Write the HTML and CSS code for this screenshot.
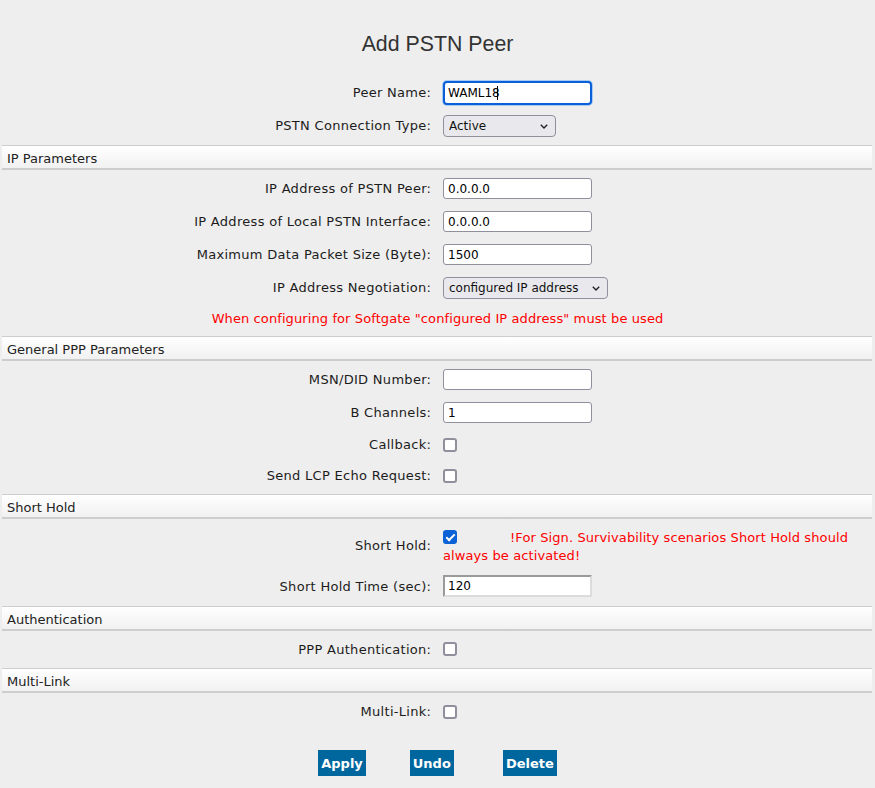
FILE: index.html
```html
<!DOCTYPE html>
<html lang="en">
<head>
<meta charset="utf-8">
<title>Add PSTN Peer</title>
<link rel="stylesheet" href="styles.css">
</head>
<body>
<div class="page">
  <h1 class="title">Add PSTN Peer</h1>

  <div class="row">
    <label class="lbl">Peer Name:</label>
    <div class="val">
      <span class="field-wrap">
        <input class="txt focus" type="text" value="WAML18">
        <span class="caret"></span>
      </span>
    </div>
  </div>
  <div class="row">
    <label class="lbl">PSTN Connection Type:</label>
    <div class="val">
      <span class="sel-wrap">
        <select class="sel sel-short"><option>Active</option></select>
        <svg class="chev" width="8" height="5" viewBox="0 0 8 5"><path d="M0.8 0.8 L4 4 L7.2 0.8" fill="none" stroke="#222" stroke-width="1.4"/></svg>
      </span>
    </div>
  </div>

  <div class="section">IP Parameters</div>
  <div class="row">
    <label class="lbl">IP Address of PSTN Peer:</label>
    <div class="val"><input class="txt" type="text" value="0.0.0.0"></div>
  </div>
  <div class="row">
    <label class="lbl">IP Address of Local PSTN Interface:</label>
    <div class="val"><input class="txt" type="text" value="0.0.0.0"></div>
  </div>
  <div class="row">
    <label class="lbl">Maximum Data Packet Size (Byte):</label>
    <div class="val"><input class="txt" type="text" value="1500"></div>
  </div>
  <div class="row">
    <label class="lbl">IP Address Negotiation:</label>
    <div class="val">
      <span class="sel-wrap">
        <select class="sel sel-long"><option>configured IP address</option></select>
        <svg class="chev" width="8" height="5" viewBox="0 0 8 5"><path d="M0.8 0.8 L4 4 L7.2 0.8" fill="none" stroke="#222" stroke-width="1.4"/></svg>
      </span>
    </div>
  </div>
  <div class="note">When configuring for Softgate "configured IP address" must be used</div>

  <div class="section">General PPP Parameters</div>
  <div class="row">
    <label class="lbl">MSN/DID Number:</label>
    <div class="val"><input class="txt" type="text" value=""></div>
  </div>
  <div class="row">
    <label class="lbl">B Channels:</label>
    <div class="val"><input class="txt" type="text" value="1"></div>
  </div>
  <div class="row cb">
    <label class="lbl">Callback:</label>
    <div class="val"><input class="chk" type="checkbox"></div>
  </div>
  <div class="row cb">
    <label class="lbl">Send LCP Echo Request:</label>
    <div class="val"><input class="chk" type="checkbox"></div>
  </div>

  <div class="section">Short Hold</div>
  <div class="row tall">
    <label class="lbl">Short Hold:</label>
    <div class="val-block"><input class="chk chk-inline" type="checkbox" checked><span class="warn">!For Sign. Survivability scenarios Short Hold should always be activated!</span></div>
  </div>
  <div class="row row-34">
    <label class="lbl">Short Hold Time (sec):</label>
    <div class="val"><input class="txt inset" type="text" value="120"></div>
  </div>

  <div class="section">Authentication</div>
  <div class="row row-32">
    <label class="lbl">PPP Authentication:</label>
    <div class="val"><input class="chk" type="checkbox"></div>
  </div>

  <div class="section">Multi-Link</div>
  <div class="row">
    <label class="lbl">Multi-Link:</label>
    <div class="val"><input class="chk" type="checkbox"></div>
  </div>

  <div class="buttons">
    <button class="btn">Apply</button>
    <button class="btn">Undo</button>
    <button class="btn btn-last">Delete</button>
  </div>
</div>
</body>
</html>
```

FILE: styles.css
```css
* { box-sizing: border-box; }
html, body { margin: 0; padding: 0; }
body {
  background: #eeeeee;
  font-family: "DejaVu Sans", Verdana, sans-serif;
  font-size: 13px;
  color: #1c1c1c;
}
.page { width: 875px; }

.title {
  margin: 32px 0 20px;
  font-family: "Liberation Sans", Arial, sans-serif;
  font-size: 21.33px;
  font-weight: normal;
  line-height: 24px;
  color: #333333;
  text-align: center;
}

.row {
  display: grid;
  grid-template-columns: 431px 1fr;
  column-gap: 12px;
  align-items: center;
  height: 33px;
}
.row.cb { height: 31px; }
.row.tall { height: 48px; }
.row.row-34 { height: 34px; }
.row.row-32 { height: 32px; }

.lbl {
  text-align: right;
  letter-spacing: 0.3px;
  margin-right: -0.3px;
}
.val { display: flex; align-items: center; }
.val-block {
  line-height: 18px;
  padding-top: 4px;
  padding-right: 12px;
}

.section {
  margin: 3px 3px 2px 2px;
  height: 25px;
  border-top: 1px solid #cdcdcd;
  border-bottom: 2px solid #cdcdcd;
  background: linear-gradient(#ffffff, #f1f1f1);
  padding: 2px 0 0 5px;
  line-height: 22px;
  color: #222222;
}

.note {
  margin-top: 1px;
  height: 28px;
  line-height: 28px;
  text-align: center;
  color: #ff0000;
  letter-spacing: 0.1px;
}

.txt {
  width: 149px;
  height: 21px;
  margin: 0;
  padding: 0 4px;
  border: 1px solid #8f8f9d;
  border-radius: 3px;
  background: #ffffff;
  font-family: "DejaVu Sans", Verdana, sans-serif;
  font-size: 12px;
  color: #000000;
  outline: none;
}
.txt.focus {
  height: 24px;
  padding: 0 3px;
  border: 2px solid #0b5fd8;
  border-radius: 4px;
  box-shadow: 0 0 0 1px #a9cbf2;
}
.txt.inset {
  height: 22px;
  padding: 0 3px;
  border: 2px solid;
  border-color: #9a9a9a #dcdcdc #dcdcdc #9a9a9a;
  border-radius: 0;
}

.field-wrap { position: relative; display: inline-block; }
.caret {
  position: absolute;
  left: 54px;
  top: 5px;
  width: 1px;
  height: 14px;
  background: #000000;
}

.sel-wrap { position: relative; display: inline-block; }
.sel {
  appearance: none;
  -webkit-appearance: none;
  height: 22px;
  margin: 0;
  padding: 0 0 0 5px;
  border: 1px solid #8f8f9d;
  border-radius: 4px;
  background: #e9e9ed;
  font-family: "DejaVu Sans", Verdana, sans-serif;
  font-size: 12px;
  color: #111111;
  display: block;
}
.sel-short { width: 113px; }
.sel-long { width: 165px; }
.chev {
  position: absolute;
  right: 8px;
  top: 9px;
}

.chk {
  appearance: none;
  -webkit-appearance: none;
  width: 14px;
  height: 14px;
  margin: 0;
  border: 2px solid #8f8f9d;
  border-radius: 3px;
  background: #ffffff;
  position: relative;
}
.chk:checked {
  background: #0b62d6;
  border-color: #0b62d6;
}
.chk:checked::after {
  content: "";
  position: absolute;
  left: 3px;
  top: 0px;
  width: 3px;
  height: 7px;
  border: solid #ffffff;
  border-width: 0 2px 2px 0;
  transform: rotate(45deg);
}
.chk-inline {
  vertical-align: -2px;
}
.warn {
  margin-left: 53px;
  color: #ff0000;
  letter-spacing: 0.1px;
}

.buttons {
  margin-top: 22px;
  display: flex;
  justify-content: center;
  gap: 44px;
}
.btn {
  height: 26px;
  margin: 0;
  padding: 0 3px;
  border: none;
  background: #00669e;
  color: #ffffff;
  font-family: "DejaVu Sans", Verdana, sans-serif;
  font-size: 13px;
  font-weight: bold;
}
.btn-last { margin-left: 5px; }
```
